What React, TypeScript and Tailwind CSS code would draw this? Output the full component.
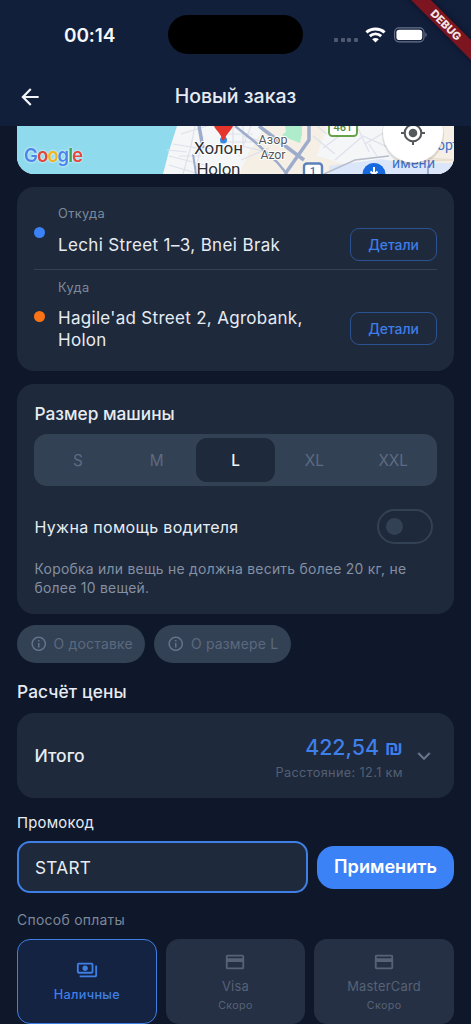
import type { ReactNode } from "react";
import { MdArrowBack, MdCreditCard, MdInfoOutline, MdKeyboardArrowDown, MdOutlinePayments } from "react-icons/md";

const sizes = ["S", "M", "L", "XL", "XXL"];

function StatusBar() {
  return (
    <div className="flex h-[69px] items-center">
      <div className="mt-[2px] w-[168px] pl-[64px] text-[19px] leading-[20px] font-semibold text-[#f4f7fb] tracking-[-0.1px]">00:14</div>
      <div className="h-[39px] w-[135px] rounded-full bg-black" />
      <div className="ml-[31px] mt-[11px] flex gap-[2.6px]">
        {[0, 1, 2, 3].map((i) => (
          <span key={i} className="h-[4px] w-[4px] rounded-[1px] bg-[#4e5870]" />
        ))}
      </div>
      <svg className="ml-[7px]" width="21" height="16" viewBox="0 0 21 16" fill="none">
        <path d="M1.400 5.400C6.400.9 14.600.9 19.600 5.400" stroke="#fff" strokeWidth="2.900" />
        <path d="M4.800 9.100C8 6.200 13 6.200 16.200 9.100" stroke="#fff" strokeWidth="2.800" />
        <path d="M10.500 15.500L7.200 12.200C9 10.500 12 10.500 13.800 12.200Z" fill="#fff" />
      </svg>
      <svg className="ml-[8px]" width="34" height="16" viewBox="0 0 34 16" fill="none">
        <rect x=".6" y=".9" width="29.400" height="14" rx="4.300" stroke="#69748a" strokeWidth="1.100" />
        <rect x="2.400" y="2.700" width="25.800" height="10.400" rx="2.800" fill="#fff" />
        <path d="M31.400 5.600c1.700.6 1.700 4 0 4.600z" fill="#69748a" />
      </svg>
    </div>
  );
}

function MapPreview() {
  return (
    <div className="h-[48px] overflow-hidden rounded-b-[17px]">
      <svg width="437" height="48" viewBox="0 0 437 48" fill="none" fontFamily="Roboto, 'Noto Sans', sans-serif">
        <rect width="437" height="48" fill="#f5f6f8" />
        <path d="M248 0H437V48H222L232 26Z" fill="#f5efe5" />
        <path d="M310 0h70l20 28-60 14-40-12z" fill="#f5f6f8" />
        <path d="M0 0H160L152 25L146 48H0Z" fill="#90daee" />

        {/* minor streets */}
        <g stroke="#dde1ea" strokeWidth="1.200">
          <path d="M156 18l30 5 38-3 36 8M152 30l40 10M164 8l26-8M166 48l8-28 4-20M178 48l8-38M210 0l-8 22M234 0l-12 30M152 39l30 9M162 30h22M150 24l20 2M226 10l28 8M224 34l28-12" />
          <path d="M306 22l30-22M318 34l28-24 40 18M340 0l12 26M296 10l22 18M348 18l30-18M360 30l-8-12M300 0l10 8M210 8h26M206 16h30M216 0v20M226 0v20" />
        </g>
        <path d="M268 0l17 0 0 8-2 9-13-5-5-3 4-3z" fill="#aeeccb" />
        <path d="M312 40l52-7 22 4h51v11H312z" fill="#dce6fb" />
        <path d="M386 28l20 4 31 2M388 36l49-2" stroke="#e8dfd0" strokeWidth="1.500" />

        {/* highways */}
        <g stroke="#9eaccb">
          <path d="M182 0L186 22" strokeWidth="3.500" />
          <path d="M218 0L238 16L260 36L270 48" strokeWidth="2.500" />
          <path d="M242 0L263 16L287 34" strokeWidth="3.500" />
          <path d="M292 0V14L268 48" strokeWidth="3.500" />
          <path d="M307 48L338 34L372 30" strokeWidth="1.500" stroke="#b7bdc8" />
          <path d="M176 28l3 20M411 40v8" strokeWidth="2" />
        </g>

        {/* road shields */}
        <rect x="312" y="-7" width="28" height="17" rx="3.500" fill="#fff" stroke="#65a34b" strokeWidth="2" />
        <text x="326" y="5" fontSize="11" fontWeight="500" textAnchor="middle" fill="#538b41">461</text>
        <rect x="287" y="37.500" width="18" height="16" rx="3" fill="#fff" stroke="#5b82bb" strokeWidth="2.400" />
        <text x="296" y="49" fontSize="11" fontWeight="500" textAnchor="middle" fill="#3f6fae">1</text>

        {/* destination marker */}
        <circle cx="206.500" cy="14" r="3.500" fill="#2f8bea" />
        <path d="M197 0h19c-2 5-6 6.500-9 14.500h-1.500C204 7 199 5 197 0Z" fill="#e6352d" />

        <g fill="#303237" stroke="#fff" strokeWidth="2" paintOrder="stroke">
          <text x="201.500" y="28" fontSize="17" textAnchor="middle" textLength="49">Холон</text>
          <text x="201.500" y="49" fontSize="17" textAnchor="middle" textLength="44">Holon</text>
          <text x="256" y="18" fontSize="12.500" textAnchor="middle" fill="#55575c" textLength="29">Азор</text>
          <text x="256" y="33" fontSize="12.500" textAnchor="middle" fill="#55575c" textLength="25">Azor</text>
        </g>

        <g fill="#3f72c9" fontSize="14">
          <text x="420" y="24">орт</text>
          <text x="375" y="42" textLength="43">имени</text>
        </g>
        <circle cx="357" cy="48.500" r="11.500" fill="#1769e0" />
        <path d="M357 41v7M353.500 45.500l3.500 3 3.500-3" stroke="#fff" strokeWidth="2" />

        {/* locate me */}
        <circle cx="396" cy="8.500" r="31" fill="#000" opacity=".1" />
        <circle cx="396" cy="6.500" r="30" fill="#fff" />
        <circle cx="396" cy="7" r="8.300" stroke="#55585d" strokeWidth="2.100" />
        <circle cx="396" cy="7" r="4.300" fill="#55585d" />
        <path d="M396-5v4M396 15v4M384 7h4M404 7h4" stroke="#55585d" strokeWidth="2" />

        <text x="7" y="36" fontSize="18.500" fontWeight="600" fontFamily="Inter, sans-serif" textLength="59" className="drop-shadow-[0_0_1px_#fff]">
          <tspan fill="#4c85ea">G</tspan>
          <tspan fill="#e2483c">o</tspan>
          <tspan fill="#f2b51d">o</tspan>
          <tspan fill="#4c85ea">g</tspan>
          <tspan fill="#3ba457">l</tspan>
          <tspan fill="#e2483c">e</tspan>
        </text>
      </svg>
    </div>
  );
}

function DetailsButton() {
  return (
    <button className="h-[33px] w-[87px] shrink-0 rounded-[9px] border border-[#2c5391] pt-px text-[13.9px] font-medium text-[#3f7de6]">
      Детали
    </button>
  );
}

function InfoChip({ children }: { children: ReactNode }) {
  return (
    <button className="flex h-[38px] items-center gap-[6.500px] rounded-full bg-[#334155] px-[12.6px] text-[13.9px] tracking-[0.22px] text-[#5b697e]">
      <MdInfoOutline className="size-[17.5px] text-[#64748b]" />
      {children}
    </button>
  );
}

function SoonCard({ name }: { name: string }) {
  return (
    <div className="flex h-[85px] flex-col items-center rounded-[13px] bg-[#253044] pt-[11.500px] text-[#566276]">
      <MdCreditCard className="size-[22px]" />
      <div className="mt-[5px] text-[12.9px] leading-[18px] tracking-[0.25px]">{name}</div>
      <div className="mt-[3px] text-[10.7px] leading-[14px] tracking-[0.4px]">Скоро</div>
    </div>
  );
}

export default function App() {
  return (
    <div className="relative h-[1024px] w-[471px] overflow-hidden bg-[#0f172a] font-['Inter',sans-serif] text-[#e7ecf3]">
      <header className="h-[126px] bg-[#121f3b]">
        <StatusBar />
        <div className="grid h-[55px] grid-cols-[60px_1fr_60px] items-center">
          <MdArrowBack className="ml-[17px] size-[26px] text-[#f1f5f9]" />
          <h1 className="-mt-px text-center text-[19.5px] leading-[24px] font-medium">Новый заказ</h1>
        </div>
      </header>

      <main className="px-[17px]">
        <MapPreview />

        {/* Addresses */}
        <section className="mt-[13px] h-[184px] rounded-[17px] bg-[#1e293b] px-[17px] pt-[17px]">
          <div className="flex h-[66px] border-b border-[#334155]">
            <span className="mt-[23px] size-[11px] shrink-0 rounded-full bg-[#3b82f6]" />
            <div className="ml-[13px] flex-1">
              <div className="mt-px text-[12.8px] leading-[18px] tracking-[0.4px] text-[#7d899b]">Откуда</div>
              <div className="mt-[11px] text-[17px] leading-[22px] tracking-[0.36px]">Lechi Street 1–3, Bnei Brak</div>
            </div>
            <div className="mt-[24px]">
              <DetailsButton />
            </div>
          </div>
          <div className="flex">
            <span className="mt-[40.500px] size-[11px] shrink-0 rounded-full bg-[#f97316]" />
            <div className="ml-[13px] flex-1">
              <div className="mt-[9px] text-[12.8px] leading-[18px] tracking-[0.4px] text-[#7d899b]">Куда</div>
              <div className="mt-[10px] text-[17px] leading-[22px] tracking-[0.3px]">Hagile'ad Street 2, Agrobank, Holon</div>
            </div>
            <div className="mt-[42px]">
              <DetailsButton />
            </div>
          </div>
        </section>

        {/* Car size */}
        <section className="mt-[13px] h-[230px] rounded-[17px] bg-[#1e293b] px-[17.500px] pt-[18px]">
          <h2 className="text-[17.3px] leading-[24px] font-medium">Размер машины</h2>
          <div className="-mx-[0.500px] mt-[8px] flex h-[52px] rounded-[13px] bg-[#334155] p-[4.4px] text-[15.3px] text-[#5d6b80]">
            {sizes.map((size) => (
              <div
                key={size}
                className={
                  size === "L"
                    ? "flex flex-1 items-center justify-center rounded-[11px] bg-[#1e293b] pt-[2px] font-medium text-[#f1f5f9]"
                    : "flex flex-1 items-center justify-center pt-[2px]"
                }
              >
                {size}
              </div>
            ))}
          </div>
          <div className="mt-[23px] flex h-[35px] items-center justify-between pr-[4px]">
            <span className="text-[16px] tracking-[0.32px]">Нужна помощь водителя</span>
            <span className="flex h-[35px] w-[56px] items-center rounded-full border-2 border-[#334155] pl-[7px]">
              <span className="size-[17px] rounded-full bg-[#334155]" />
            </span>
          </div>
          <p className="mt-[16px] text-[13.9px] leading-[19px] tracking-[0.27px] text-[#8490a3]">
            Коробка или вещь не должна весить более 20 кг, не более 10 вещей.
          </p>
        </section>

        <div className="mt-[11px] flex gap-[9px]">
          <InfoChip>О доставке</InfoChip>
          <InfoChip>О размере L</InfoChip>
        </div>

        {/* Price */}
        <h2 className="mt-[17px] text-[17.3px] leading-[24px] font-medium tracking-[0.12px]">Расчёт цены</h2>
        <section className="mt-[9px] flex h-[85px] items-center rounded-[17px] bg-[#1e293b] pr-[17px] pl-[17.500px]">
          <div className="flex-1 pt-px text-[17.5px] font-medium">Итого</div>
          <div className="pt-[3px] pr-px text-right">
            <div className="text-[21.4px] leading-[28px] font-medium text-[#3f7fe9]">422,54 ₪</div>
            <div className="mt-[3px] text-[12.7px] leading-[18px] tracking-[0.37px] text-[#536074]">Расстояние: 12.1 км</div>
          </div>
          <MdKeyboardArrowDown className="ml-[7px] size-[26px] text-[#64748b]" />
        </section>

        {/* Promo code */}
        <div className="mt-[15px] text-[14.8px] leading-[20px] tracking-[0.25px]">Промокод</div>
        <div className="mt-[8px] flex items-center gap-[9px]">
          <div className="flex h-[52px] w-[291px] items-center rounded-[13px] border-2 border-[#3f7fe4] bg-[#1e293b] pt-px pl-[16px] text-[17.2px] tracking-[0.3px]">
            START
          </div>
          <button className="h-[43px] flex-1 rounded-[17px] bg-[#3b82f6] text-[18.1px] font-semibold text-white">Применить</button>
        </div>

        {/* Payment */}
        <div className="mt-[17px] text-[13.9px] leading-[20px] tracking-[0.3px] text-[#7d899b]">Способ оплаты</div>
        <div className="mt-[9px] grid grid-cols-3 gap-[8.8px]">
          <div className="flex h-[85px] flex-col items-center rounded-[13px] border-[1.6px] border-[#3f7fe4] bg-[#152342] pt-[19px] text-[#3f7fe4]">
            <MdOutlinePayments className="size-[22px]" />
            <div className="mt-[5px] text-[12.7px] leading-[18px] font-medium tracking-[0.3px]">Наличные</div>
          </div>
          <SoonCard name="Visa" />
          <SoonCard name="MasterCard" />
        </div>
      </main>

      {/* Corner ribbon */}
      <div className="absolute top-[18px] left-[376px] flex h-[14px] w-[140px] rotate-45 items-center justify-center bg-[#7c1520] text-[11px] leading-none font-extrabold text-[#f3e6e8] shadow-[0_0_6px_rgba(0,0,0,0.5)]">
        DEBUG
      </div>
    </div>
  );
}
